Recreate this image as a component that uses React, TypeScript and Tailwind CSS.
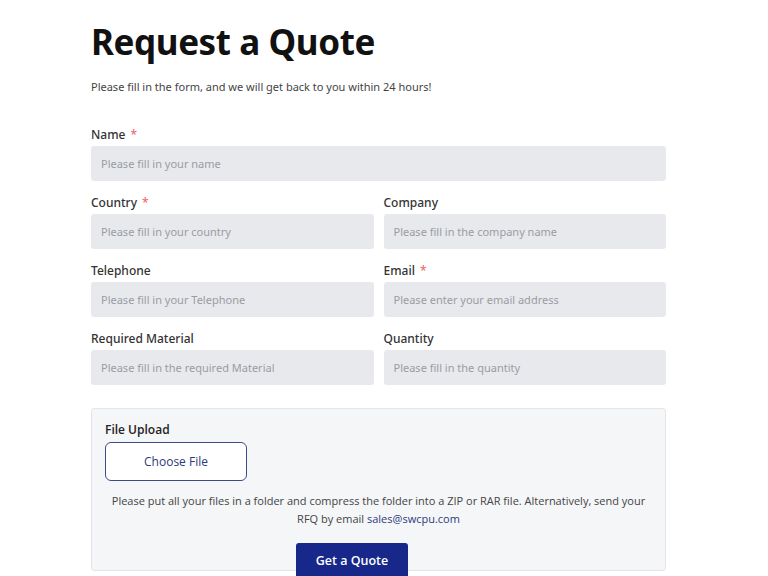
import React from 'react';

const Label = ({ text, required }: { text: string; required?: boolean }) => (
  <label className="block text-[12px] font-medium text-[#333] leading-[16px] mb-[3px]">
    {text}
    {required && <span className="text-[#f26b6b] ml-[5px]">*</span>}
  </label>
);

const Field = ({ label, placeholder, required }: { label: string; placeholder: string; required?: boolean }) => (
  <div className="flex flex-col">
    <Label text={label} required={required} />
    <input
      className="h-[35px] w-full rounded-[3px] bg-[#e8e9ec] px-[10px] text-[11px] text-[#333] placeholder:text-[#9a9ca3] outline-none"
      placeholder={placeholder}
    />
  </div>
);

export default function App() {
  return (
    <div className="min-h-screen bg-white" style={{ fontFamily: '"Noto Sans", "Open Sans", sans-serif' }}>
      <div className="ml-[91px] w-[575px] pt-[18px]">
        <h1 className="text-[35px] font-bold leading-[48px] text-[#111] tracking-[-0.4px]">Request a Quote</h1>
        <p className="mt-[13px] text-[11px] leading-[16px] text-[#444]">
          Please fill in the form, and we will get back to you within 24 hours!
        </p>

        <div className="mt-[32px]">
          <Field label="Name" placeholder="Please fill in your name" required />
        </div>

        <div className="mt-[14px] grid grid-cols-2 gap-x-[10px] gap-y-[14px]">
          <Field label="Country" placeholder="Please fill in your country" required />
          <Field label="Company" placeholder="Please fill in the company name" />
          <Field label="Telephone" placeholder="Please fill in your Telephone" />
          <Field label="Email" placeholder="Please enter your email address" required />
          <Field label="Required Material" placeholder="Please fill in the required Material" />
          <Field label="Quantity" placeholder="Please fill in the quantity" />
        </div>

        <div
          className="mt-[23px] h-[163px] rounded-[3px] border border-[#e3e5ea] bg-[#f5f6f8] px-[13px] pt-[13px]"
          style={{ fontFamily: '"Open Sans", "Noto Sans", sans-serif' }}
        >
          <div className="text-[12px] font-semibold leading-[16px] text-[#222]">File Upload</div>
          <button className="mt-[4px] h-[39px] w-[142px] rounded-[6px] border-[1.5px] border-[#3c4a8a] bg-white text-[12px] text-[#2d3a7c]">
            Choose File
          </button>
          <p className="mt-[11px] text-center text-[11px] leading-[18px] text-[#444]">
            Please put all your files in a folder and compress the folder into a ZIP or RAR file. Alternatively, send your
            <br />
            RFQ by email <span className="text-[#2d3a7c]">sales@swcpu.com</span>
          </p>
        </div>
        <button
          className="-mt-[28px] ml-[205px] block h-[36px] w-[112px] rounded-[3px] bg-[#17288a] text-[12.5px] font-semibold text-white"
          style={{ fontFamily: '"Open Sans", "Noto Sans", sans-serif' }}
        >
          Get a Quote
        </button>
      </div>
    </div>
  );
}
